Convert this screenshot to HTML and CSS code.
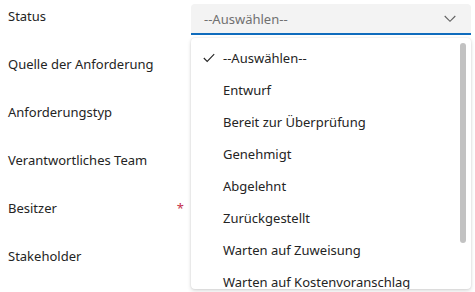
FILE: index.html
```html
<!DOCTYPE html>
<html lang="de">
<head>
<meta charset="utf-8">
<link rel="stylesheet" href="styles.css">
</head>
<body>
<div class="form">
  <div class="row">
    <div class="label">Status</div>
    <div class="select">
      <span class="placeholder">--Auswählen--</span>
      <svg class="chev" width="12" height="8" viewBox="0 0 12 8"><path d="M0.7 1 L6 6.3 L11.3 1" fill="none" stroke="#616161" stroke-width="1.1"/></svg>
    </div>
  </div>
  <div class="row"><div class="label">Quelle der Anforderung</div></div>
  <div class="row"><div class="label">Anforderungstyp</div></div>
  <div class="row"><div class="label">Verantwortliches Team</div></div>
  <div class="row"><div class="label">Besitzer<span class="req">*</span></div></div>
  <div class="row"><div class="label">Stakeholder</div></div>
</div>
<div class="listbox">
  <div class="option selected"><svg class="check" width="12" height="10" viewBox="0 0 12 10"><path d="M0.8 5 L4.2 8.4 L11.2 1.2" fill="none" stroke="#242424" stroke-width="1.1"/></svg>--Auswählen--</div>
  <div class="option">Entwurf</div>
  <div class="option">Bereit zur Überprüfung</div>
  <div class="option">Genehmigt</div>
  <div class="option">Abgelehnt</div>
  <div class="option">Zurückgestellt</div>
  <div class="option">Warten auf Zuweisung</div>
  <div class="option">Warten auf Kostenvoranschlag</div>
  <div class="scrollthumb"></div>
</div>
</body>
</html>
```
FILE: styles.css
```css
html, body {
  margin: 0;
  padding: 0;
  background: #ffffff;
  font-family: "Noto Sans", "Open Sans", sans-serif;
  font-size: 13px;
  color: #242424;
  overflow: hidden;
}
.form {
  display: flex;
  flex-direction: column;
}
.row {
  display: flex;
  height: 48px;
  align-items: flex-start;
}
.label {
  width: 177px;
  padding-left: 8px;
  padding-top: 6px;
  line-height: 20px;
  display: flex;
  justify-content: space-between;
}
.req {
  color: #c4314b;
  font-size: 13px;
  padding-right: 1px;
}
.select {
  margin-top: 4px;
  margin-left: 6px;
  width: 280px;
  height: 29px;
  box-sizing: content-box;
  background: #f3f3f3;
  border-bottom: 2px solid #0f6cbd;
  border-radius: 4px 4px 0 0;
  display: flex;
  align-items: center;
  justify-content: space-between;
  padding: 0;
}
.placeholder {
  color: #707070;
  padding-left: 13px;
  line-height: 20px;
  padding-top: 1px;
}
.chev {
  margin-right: 15px;
  margin-top: 1px;
}
.listbox {
  position: absolute;
  left: 191px;
  top: 38px;
  width: 280px;
  height: 251px;
  background: #ffffff;
  border-radius: 4px;
  box-shadow: 0 0 2px rgba(0,0,0,0.12), 0 2px 4px rgba(0,0,0,0.14);
  padding-top: 4px;
  box-sizing: border-box;
  overflow: hidden;
}
.option {
  height: 32px;
  line-height: 33px;
  padding-left: 32px;
  position: relative;
  white-space: nowrap;
}
.check {
  position: absolute;
  left: 12px;
  top: 11px;
}
.scrollthumb {
  position: absolute;
  right: 5px;
  top: 5px;
  width: 6px;
  height: 200px;
  background: #c2c2c2;
  border-radius: 3px;
}
```
